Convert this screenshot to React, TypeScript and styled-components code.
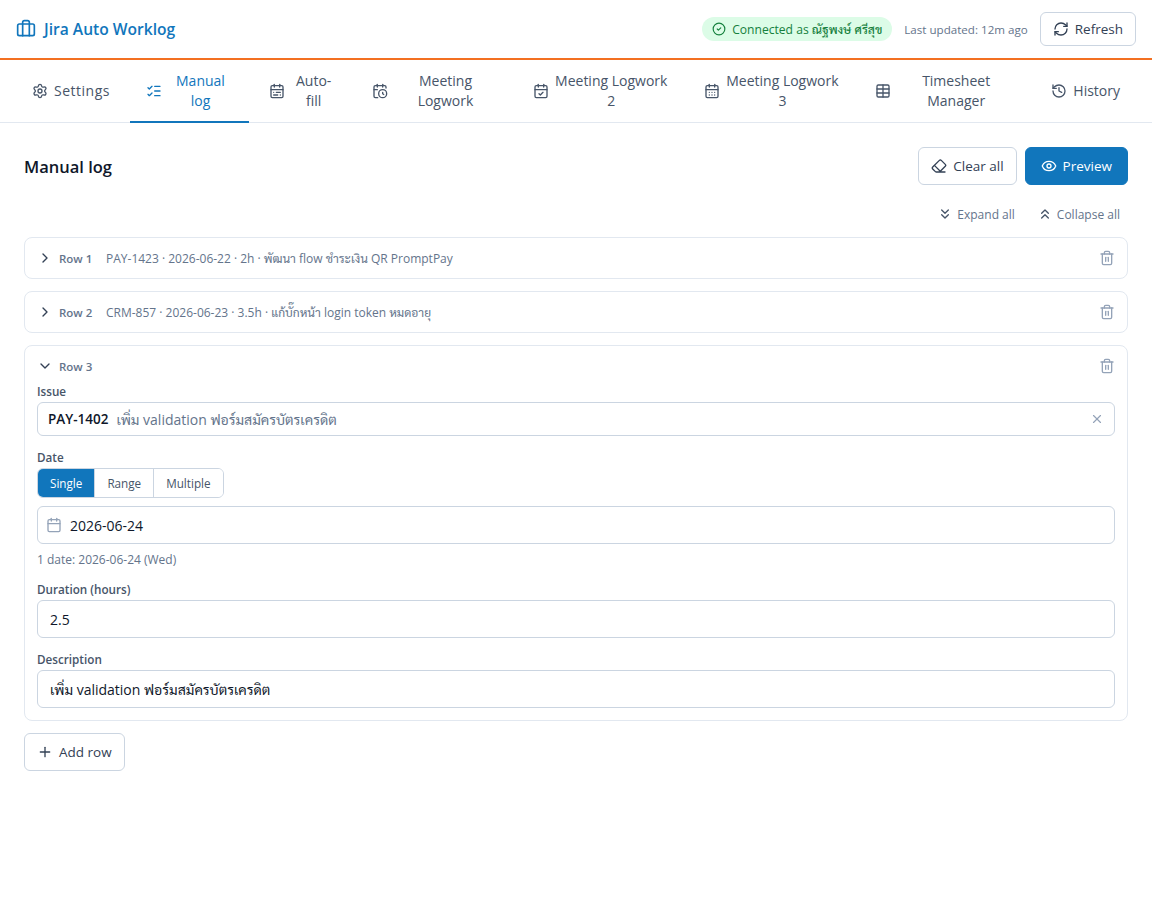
import React from "react";
import styled, { createGlobalStyle } from "styled-components";
import {
  Briefcase, CircleCheck, RefreshCw, Settings, ListChecks, CalendarRange, CalendarClock, CalendarCheck,
  CalendarDays, Table, History, Eraser, Eye, ChevronsDown, ChevronsUp, ChevronRight, ChevronDown, Trash2, X, Calendar, Plus,
} from "lucide-react";

const FONT = `"Open Sans", Sarabun, "Noto Sans", sans-serif`;

const Global = createGlobalStyle`
  html, body { margin: 0; padding: 0; background: #fff; }
  body { font-family: ${FONT}; color: #0f172a; }
  * { box-sizing: border-box; }
`;

const Header = styled.header`
  height: 60px; display: flex; align-items: center; justify-content: space-between;
  padding: 0 16px; border-bottom: 2px solid #f37021;
`;
const Brand = styled.div`
  display: flex; align-items: center; gap: 8px; color: #1176bc; font-size: 15.6px; font-weight: 600;
`;
const HeaderRight = styled.div`display: flex; align-items: center; gap: 12px;`;
const Status = styled.div`
  height: 24px; display: flex; align-items: center; gap: 6px; padding: 0 10px; border-radius: 12px;
  background: #dcfce7; color: #15803d; font-size: 12.1px; font-weight: 500;
`;
const Updated = styled.span`font-size: 11.6px; color: #64748b;`;
const Btn = styled.button<{ $primary?: boolean; $h?: number }>`
  height: ${p => p.$h ?? 38}px; display: inline-flex; align-items: center; justify-content: center; gap: 6px;
  padding: 0 ${p => (p.$primary ? 15 : 12)}px;
  border-radius: 6px; font: 500 13.5px ${FONT}; cursor: pointer;
  background: ${p => (p.$primary ? "#1176bc" : "#fff")};
  color: ${p => (p.$primary ? "#fff" : "#334155")};
  border: 1px solid ${p => (p.$primary ? "#1176bc" : "#cbd5e1")};
`;
const Nav = styled.nav`
  height: 63px; display: flex; align-items: stretch; gap: 4px; padding: 0 16px; border-bottom: 1px solid #e2e8f0;
`;
const Tab = styled.button<{ $active?: boolean }>`
  flex: 0 1 auto; display: flex; align-items: center; gap: 6px; padding: 0 16px; background: none; border: 0;
  border-bottom: 2px solid ${p => (p.$active ? "#1176bc" : "transparent")};
  color: ${p => (p.$active ? "#1176bc" : "#475569")};
  font: 500 14px/20px ${FONT}; margin-bottom: -1px;
  svg { flex: none; }
  &:first-child { letter-spacing: .5px; }
`;
const TabLabel = styled.span`flex: 1; text-align: center;`;
const Main = styled.main`padding: 24px;`;
const TitleRow = styled.div`display: flex; align-items: center; justify-content: space-between; margin-bottom: 16px;`;
const Title = styled.h1`margin: 0; font-size: 16.5px; font-weight: 600; color: #0f172a;`;
const Actions = styled.div`display: flex; gap: 8px;`;
const Tools = styled.div`display: flex; justify-content: flex-end; gap: 6px; margin-bottom: 10px;`;
const ToolBtn = styled.button`
  height: 26px; display: flex; align-items: center; gap: 4px; padding: 0 8px; background: none; border: 0;
  color: #64748b; font: 500 12px ${FONT};
  svg { color: #475569; }
`;
const Rows = styled.div`display: flex; flex-direction: column; gap: 12px;`;
const Card = styled.section`border: 1px solid #e2e8f0; border-radius: 8px; padding: 0 12px 12px;`;
const RowHead = styled.div<{ $open?: boolean }>`
  height: 40px; display: flex; align-items: center; gap: 6px; margin-bottom: ${p => (p.$open ? -4 : -12)}px;
  color: #64748b; font-size: 12px;
  svg { flex: none; }
`;
const RowName = styled.span`font-weight: 600; font-size: 11.5px; width: 41px; flex: none; color: #64748b;`;
const Summary = styled.span`flex: 1; color: #64748b;`;
const Label = styled.label`display: block; font-size: 11.7px; font-weight: 600; color: #475569; line-height: 18px; margin-bottom: 2px;`;
const Field = styled.div<{ $last?: boolean }>`margin-bottom: ${p => (p.$last ? 0 : 12)}px;`;
const Input = styled.div<{ $h?: number; $pad?: number }>`
  height: ${p => p.$h ?? 38}px; display: flex; align-items: center; gap: 8px; padding: 0 ${p => p.$pad ?? 12}px;
  border: 1px solid #cbd5e1; border-radius: 6px; font-size: 14px; color: #0f172a;
`;
const IssueKey = styled.strong`font-weight: 600; font-size: 13.5px;`;
const IssueText = styled.span`flex: 1; color: #64748b; font-size: 14px;`;
const Seg = styled.div`display: inline-flex; border: 1px solid #cbd5e1; border-radius: 6px; overflow: hidden; margin-bottom: 8px; vertical-align: top;`;
const SegBtn = styled.button<{ $active?: boolean }>`
  height: 28px; padding: 0 12px; border: 0; border-left: 1px solid #cbd5e1; font: 500 11.7px ${FONT};
  background: ${p => (p.$active ? "#1176bc" : "#fff")}; color: ${p => (p.$active ? "#fff" : "#475569")};
  &:first-child { border-left: 0; }
`;
const Hint = styled.div`font-size: 12px; line-height: 16px; color: #64748b; margin-top: 8px;`;
const AddWrap = styled.div`margin-top: 12px;`;

const tabs: [React.ComponentType<any>, string, boolean?][] = [
  [Settings, "Settings"], [ListChecks, "Manual log", true], [CalendarRange, "Auto-fill"], [CalendarClock, "Meeting Logwork"],
  [CalendarCheck, "Meeting Logwork 2"], [CalendarDays, "Meeting Logwork 3"], [Table, "Timesheet Manager"], [History, "History"],
];

export default function App() {
  return (
    <>
      <Global />
      <Header>
        <Brand><Briefcase size={20} />Jira Auto Worklog</Brand>
        <HeaderRight>
          <Status><CircleCheck size={14} />Connected as ณัฐพงษ์ ศรีสุข</Status>
          <Updated>Last updated: 12m ago</Updated>
          <Btn $h={34}><RefreshCw size={16} />Refresh</Btn>
        </HeaderRight>
      </Header>
      <Nav>
        {tabs.map(([I, t, a]) => (
          <Tab key={t} $active={a}><I size={16} /><TabLabel>{t}</TabLabel></Tab>
        ))}
      </Nav>
      <Main>
        <TitleRow>
          <Title>Manual log</Title>
          <Actions>
            <Btn><Eraser size={16} />Clear all</Btn>
            <Btn $primary><Eye size={16} />Preview</Btn>
          </Actions>
        </TitleRow>
        <Tools>
          <ToolBtn><ChevronsDown size={16} />Expand all</ToolBtn>
          <ToolBtn><ChevronsUp size={16} />Collapse all</ToolBtn>
        </Tools>
        <Rows>
          <Card>
            <RowHead>
              <ChevronRight size={16} color="#334155" /><RowName>Row 1</RowName>
              <Summary>PAY-1423 · 2026-06-22 · 2h · พัฒนา flow ชำระเงิน QR PromptPay</Summary>
              <Trash2 size={16} color="#94a3b8" />
            </RowHead>
          </Card>
          <Card>
            <RowHead>
              <ChevronRight size={16} color="#334155" /><RowName>Row 2</RowName>
              <Summary>CRM-857 · 2026-06-23 · 3.5h · แก้บั๊กหน้า login token หมดอายุ</Summary>
              <Trash2 size={16} color="#94a3b8" />
            </RowHead>
          </Card>
          <Card>
            <RowHead $open>
              <ChevronDown size={16} color="#334155" /><RowName>Row 3</RowName>
              <Summary />
              <Trash2 size={16} color="#94a3b8" />
            </RowHead>
            <Field>
              <Label>Issue</Label>
              <Input $h={34} $pad={10}>
                <IssueKey>PAY-1402</IssueKey>
                <IssueText>เพิ่ม validation ฟอร์มสมัครบัตรเครดิต</IssueText>
                <X size={14} color="#94a3b8" />
              </Input>
            </Field>
            <Field>
              <Label>Date</Label>
              <Seg>
                <SegBtn $active>Single</SegBtn><SegBtn>Range</SegBtn><SegBtn>Multiple</SegBtn>
              </Seg>
              <Input $pad={8}><Calendar size={16} color="#94a3b8" />2026-06-24</Input>
              <Hint>1 date: 2026-06-24 (Wed)</Hint>
            </Field>
            <Field>
              <Label>Duration (hours)</Label>
              <Input>2.5</Input>
            </Field>
            <Field $last>
              <Label>Description</Label>
              <Input>เพิ่ม validation ฟอร์มสมัครบัตรเครดิต</Input>
            </Field>
          </Card>
        </Rows>
        <AddWrap>
          <Btn><Plus size={16} />Add row</Btn>
        </AddWrap>
      </Main>
    </>
  );
}
